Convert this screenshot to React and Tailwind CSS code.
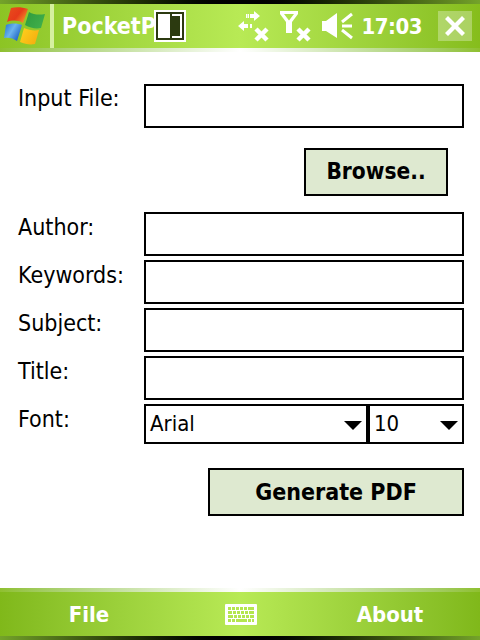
import React from "react";

const font = "font-['DejaVu_Sans_Condensed','DejaVu_Sans',sans-serif]";

function WinLogo() {
  return (
    <svg width="46" height="44" viewBox="0 0 46 44" className="shrink-0">
      <defs>
        <linearGradient id="r" x1="0" y1="0" x2="1" y2="0.6"><stop offset="0" stopColor="#e8501c" /><stop offset="0.6" stopColor="#e63a1a" /><stop offset="1" stopColor="#f08c28" /></linearGradient>
        <linearGradient id="g" x1="0" y1="0" x2="1" y2="0.6"><stop offset="0" stopColor="#2e9a3e" /><stop offset="1" stopColor="#3fae4a" /></linearGradient>
        <linearGradient id="b" x1="0" y1="0" x2="1" y2="0.6"><stop offset="0" stopColor="#1f6fd0" /><stop offset="0.5" stopColor="#6cb4ee" /><stop offset="1" stopColor="#1d62c4" /></linearGradient>
        <linearGradient id="y" x1="0" y1="0" x2="1" y2="0.6"><stop offset="0" stopColor="#ffd21e" /><stop offset="1" stopColor="#f5b010" /></linearGradient>
      </defs>
      <path d="M11 4 C16 3 22 3 28 5 L23 19 C18 16 12 16 7 18 Z" fill="url(#r)" />
      <path d="M29 8 C34 11 40 11 45 10 L41 24 C36 25 30 24 25 21 Z" fill="url(#g)" />
      <path d="M6 21 C11 19 17 19 22 21 L17 37 C13 34 8 33 4 34 Z" fill="url(#b)" />
      <path d="M24 24 C29 26 34 27 39 26 L35 40 C30 41 25 40 20 38 Z" fill="url(#y)" />
    </svg>
  );
}

function ConnIcon() {
  return (
    <svg width="32" height="32" viewBox="0 0 32 32" fill="white" className="shrink-0">
      <path d="M16 1l6 5-6 5V8h-4V4h4zM8 4h1.500v4H8zM10 4h1v4h-1z" />
      <path d="M0 16l6-5v3h4v4H6v3zM12 14h2v4h-2z" />
      <path d="M18 19l11 11M29 19L18 30" stroke="white" strokeWidth="4.500" />
    </svg>
  );
}

function SignalIcon() {
  return (
    <svg width="32" height="32" viewBox="0 0 32 32" fill="white" className="shrink-0">
      <path fillRule="evenodd" d="M0 1h18v3l-6 8v11H6V12L0 4zM4 4l5 6.500L14 4z" />
      <path d="M18 19l11 11M29 19L18 30" stroke="white" strokeWidth="4.500" />
    </svg>
  );
}

function VolumeIcon() {
  return (
    <svg width="32" height="28" viewBox="0 0 32 28" fill="white" className="shrink-0">
      <path d="M0 9h4L15 1v25L4 19H0z" />
      <path d="M20 10L30 2M20 14h10M20 18l10 8" stroke="white" strokeWidth="3" />
    </svg>
  );
}

function KeyboardIcon() {
  const rows = [
    { y: 3, keys: [[3, 3], [7, 3], [11, 3], [15, 3], [19, 3], [23, 3], [26, 3]] },
    { y: 7, keys: [[3, 4], [8, 3], [12, 3], [16, 3], [20, 3], [24, 5]] },
    { y: 11, keys: [[3, 5], [9, 3], [13, 3], [17, 3], [21, 3], [25, 4]] },
    { y: 15, keys: [[3, 3], [7, 3], [11, 11], [23, 3], [27, 2]] },
  ];
  return (
    <svg width="32" height="21" viewBox="0 0 32 21" className="shrink-0">
      <rect width="32" height="21" rx="1" fill="white" />
      {rows.map((row) =>
        row.keys.map(([x, w]) => (
          <rect key={`${row.y}-${x}`} x={x} y={row.y} width={w} height="3" fill="#b4e64e" />
        ))
      )}
    </svg>
  );
}

function Field({ label, top = "pt-px" }) {
  return (
    <div className="flex items-start h-11">
      <label className={`w-[126px] shrink-0 text-[23px] leading-7 text-black ${top}`}>{label}</label>
      <div className="w-[320px] h-11 border-2 border-black bg-white" />
    </div>
  );
}

function Select({ value, className }) {
  return (
    <div className={`h-10 border-2 border-black bg-white flex items-center justify-between pl-1 pr-1 ${className}`}>
      <span className="text-[22px] leading-7 text-black">{value}</span>
      <span className="w-0 h-0 border-x-[9px] border-x-transparent border-t-[9px] border-t-black mt-0.5" />
    </div>
  );
}

function Button({ children, className }) {
  return (
    <button className={`h-12 border-2 border-black bg-[#dee9d0] font-bold text-black ${className}`}>
      {children}
    </button>
  );
}

export default function App() {
  return (
    <div className={`relative w-[480px] h-[640px] flex flex-col bg-white overflow-hidden ${font}`}>
      <div className="h-1 bg-gradient-to-r from-[#74a32a] via-black to-[#74a32a]" />
      <div className="h-11 flex items-center bg-gradient-to-r from-[#8cc424] via-[#b8ea55] to-[#86bd1c]">
        <div className="w-[50px] flex items-center"><WinLogo /></div>
        <div className="w-1 h-11 bg-[#d6f0a0]" />
        <span className="ml-2 text-[23px] font-bold text-white whitespace-nowrap">PocketPDF</span>
        <div className="ml-auto flex items-center">
          <ConnIcon />
          <div className="w-2.5" />
          <SignalIcon />
          <div className="w-2.5" />
          <VolumeIcon />
          <span className="ml-[7px] text-[22px] tracking-[-0.5px] font-bold text-white">17:03</span>
          <div className="ml-4 mr-2 w-[34px] h-[30px] bg-white/30 flex items-center justify-center">
            <svg width="20" height="20" viewBox="0 0 20 20" fill="white"><path d="M0 3l3-3 7 7 7-7 3 3-7 7 7 7-3 3-7-7-7 7-3-3 7-7z" /></svg>
          </div>
        </div>
      </div>
      <div className="h-1 bg-gradient-to-r from-[#8fc02f] via-white to-[#8fc02f]" />

      <main className="flex-1 pt-8 pl-[18px] flex flex-col">
        <Field label="Input File:" top="" />
        <div className="flex justify-end pr-8 mt-5 mb-4">
          <Button className="w-36 text-[22.5px]">Browse..</Button>
        </div>
        <div className="flex flex-col gap-1">
          <Field label="Author:" />
          <Field label="Keywords:" />
          <Field label="Subject:" />
          <Field label="Title:" />
          <div className="flex items-start h-10">
            <label className="w-[126px] shrink-0 pt-px text-[23px] leading-7 text-black">Font:</label>
            <div className="flex">
              <Select value="Arial" className="w-56" />
              <Select value="10" className="w-24" />
            </div>
          </div>
        </div>
        <div className="flex justify-end pr-4 mt-6">
          <Button className="w-64 text-[23px]">Generate PDF</Button>
        </div>
      </main>

      <div className="h-1 bg-gradient-to-r from-[#8fc02f] via-white to-[#8fc02f]" />
      <div className="h-11 flex items-center bg-gradient-to-r from-[#80b81a] via-[#b8ea55] to-[#80b81a]">
        <span className="w-[178px] text-center text-[22px] font-bold text-white">File</span>
        <div className="ml-[47px]"><KeyboardIcon /></div>
        <span className="ml-auto w-[180px] text-center text-[22px] font-bold text-white">About</span>
      </div>
      <div className="h-1 bg-gradient-to-r from-[#74a32a] via-black to-[#74a32a]" />

      <div className="absolute left-[154px] top-[10px] w-8 h-8 border-2 border-white bg-[#2c3a10] p-0.5 flex gap-0.5">
        <div className="w-3 h-full bg-white" />
        <div className="flex-1 h-full border-2 border-l-0 border-white" />
      </div>
    </div>
  );
}
